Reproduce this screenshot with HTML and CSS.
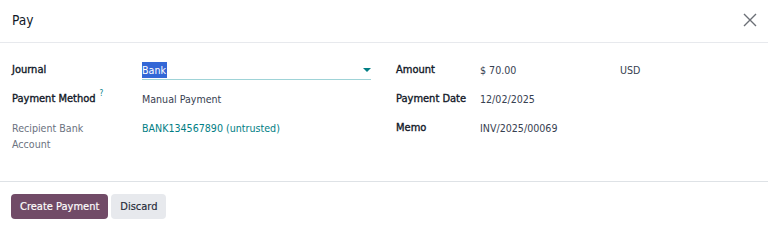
FILE: index.html
```html
<!DOCTYPE html>
<html lang="en">
<head>
<meta charset="utf-8">
<title>Pay</title>
<link rel="stylesheet" href="styles.css">
</head>
<body>
<div class="dialog">
  <header class="dlg-header">
    <h4 class="dlg-title">Pay</h4>
    <button class="dlg-close" type="button" aria-label="Close">
      <svg width="14" height="14" viewBox="0 0 14 14"><path d="M1 1L13 13M13 1L1 13" stroke="#6b6f76" stroke-width="1.4" fill="none"/></svg>
    </button>
  </header>
  <main class="dlg-body">
    <div class="group">
      <div class="row">
        <div class="label strong">Journal</div>
        <div class="value">
          <div class="select"><span class="sel-text">Bank</span><span class="caret"></span></div>
        </div>
      </div>
      <div class="row">
        <div class="label strong">Payment Method<sup class="help">?</sup></div>
        <div class="value">Manual Payment</div>
      </div>
      <div class="row">
        <div class="label muted">Recipient Bank<br>Account</div>
        <div class="value"><a class="link" href="#">BANK134567890 (untrusted)</a></div>
      </div>
    </div>
    <div class="group group-right">
      <div class="row">
        <div class="label strong">Amount</div>
        <div class="value amount"><span class="amount-val">$ 70.00</span><span class="currency">USD</span></div>
      </div>
      <div class="row">
        <div class="label strong">Payment Date</div>
        <div class="value">12/02/2025</div>
      </div>
      <div class="row">
        <div class="label strong">Memo</div>
        <div class="value">INV/2025/00069</div>
      </div>
    </div>
  </main>
  <footer class="dlg-footer">
    <button class="btn btn-primary" type="button">Create Payment</button>
    <button class="btn btn-secondary" type="button">Discard</button>
  </footer>
</div>
</body>
</html>
```
FILE: styles.css
```css
html, body {
  margin: 0;
  padding: 0;
  background: #ffffff;
}
body {
  font-family: "DejaVu Sans Condensed", "DejaVu Sans", sans-serif;
  font-size: 10.6px;
  line-height: 16px;
  color: #374151;
}
.dialog {
  width: 768px;
  height: 230px;
  display: flex;
  flex-direction: column;
}
.dlg-header {
  height: 42px;
  border-bottom: 1px solid #e7e9ed;
  display: flex;
  align-items: center;
  justify-content: space-between;
  padding: 0 12px;
  box-sizing: content-box;
}
.dlg-title {
  margin: 0;
  font-size: 13.6px;
  font-weight: 400;
  color: #111827;
  line-height: 20px;
  position: relative;
  top: -1px;
}
.dlg-close {
  border: 0;
  background: none;
  padding: 0;
  width: 14px;
  height: 14px;
  display: flex;
  margin-right: -1px;
  position: relative;
  top: -1px;
}
.dlg-body {
  display: flex;
  padding: 19px 0 0;
  height: 119px;
  border-bottom: 1px solid #dee2e6;
}
.group {
  width: 384px;
  padding: 0 12px;
  box-sizing: border-box;
}
.row {
  display: flex;
  min-height: 29px;
}
.label {
  width: 130px;
  flex: none;
  color: #111827;
}
.group-right .label {
  width: 84px;
}
.strong {
  font-weight: 400;
  font-size: 11px;
  color: #111827;
  -webkit-text-stroke: 0.35px #111827;
}
.muted {
  color: #6b7280;
}
.help {
  color: #017e84;
  font-size: 8px;
  vertical-align: top;
  position: relative;
  top: -5px;
  margin-left: 4px;
  -webkit-text-stroke: 0;
}
.value {
  flex: 1;
  color: #374151;
}
.select {
  display: flex;
  justify-content: space-between;
  align-items: center;
  width: 229px;
  border-bottom: 1px solid #9fd3d7;
  padding-bottom: 1px;
}
.sel-text {
  background: #3367d6;
  color: #ffffff;
  padding-right: 1px;
}
.caret {
  width: 0;
  height: 0;
  border-left: 4px solid transparent;
  border-right: 4px solid transparent;
  border-top: 4px solid #017e84;
  margin-right: 0;
}
.link {
  color: #017e84;
  text-decoration: none;
}
.amount {
  display: flex;
}
.amount-val {
  width: 140px;
}
.dlg-footer {
  display: flex;
  gap: 3px;
  padding: 12px 11px 0;
}
.btn {
  font-family: inherit;
  font-size: 11px;
  line-height: 16px;
  height: 25px;
  border: 0;
  border-radius: 4px;
  padding: 0 9px;
  cursor: pointer;
  -webkit-text-stroke: 0.15px currentColor;
}
.btn-primary {
  background: #714b67;
  color: #ffffff;
}
.btn-secondary {
  background: #e7e9ed;
  color: #1f2937;
}
```
